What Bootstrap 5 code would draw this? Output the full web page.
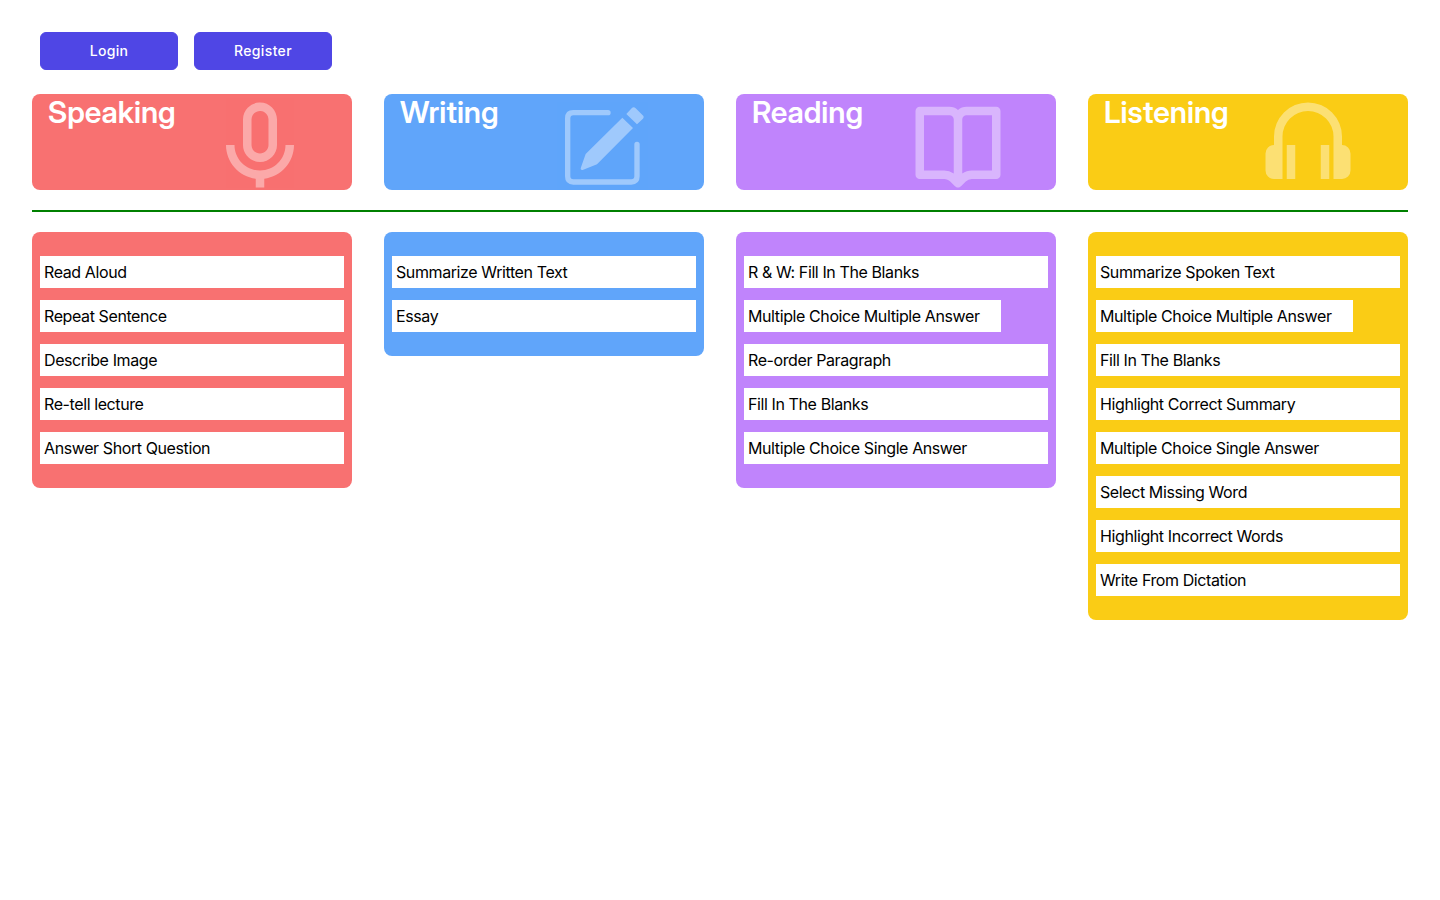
<!DOCTYPE html>
<html lang="en">
<head>
<meta charset="utf-8">
<meta name="viewport" content="width=device-width, initial-scale=1">
<title>Practice</title>
<link href="https://cdn.jsdelivr.net/npm/bootstrap@5.3.0/dist/css/bootstrap.min.css" rel="stylesheet">
<style>
  body { font-family: Inter, sans-serif; color: #000; }
  .page { padding: 32px; }
  .btn-indigo {
    --bs-btn-color: #fff; --bs-btn-bg: #4f46e5; --bs-btn-border-color: #4f46e5;
    --bs-btn-hover-color: #fff; --bs-btn-hover-bg: #4338ca; --bs-btn-hover-border-color: #4338ca;
    width: 138px; padding: 8px 16px; border-radius: 6px;
    font-size: 14px; line-height: 20px; font-weight: 500; letter-spacing: .025em;
  }
  .skills { --bs-gutter-x: 32px; --bs-gutter-y: 32px; }
  .skill { height: 96px; border-radius: 8px; padding-left: 16px; overflow: hidden; }
  .skill h2 { font-family: "Inter Display", Inter, sans-serif; font-size: 30px; line-height: 36px; font-weight: 600; }
  .skill svg { width: 102px; height: 102px; fill: #fff; opacity: .4; margin-right: 47px; flex: none; }
  .skill.coral svg { margin-right: 41px; }
  .skill.amber svg { margin-right: 49px; }
  .coral { background: #f87171; }
  .azure { background: #60a5fa; }
  .violet { background: #c084fc; }
  .amber { background: #facc15; }
  .rule { height: 2px; margin: 20px 0; background: green; border: 0; opacity: 1; }
  .tasks { border-radius: 8px; padding: 24px 8px; gap: 12px; }
  .tasks a { display: block; background: #fff; color: #000; padding: 4px; font-size: 16px; line-height: 24px; text-decoration: none; letter-spacing: -.025em; }
  .tasks .snug { align-self: flex-start; padding-right: 21px; }
</style>
</head>
<body>
<main class="page">
  <div class="d-flex gap-3 px-2 mb-4">
    <button type="button" class="btn btn-indigo">Login</button>
    <button type="button" class="btn btn-indigo">Register</button>
  </div>

  <div class="row row-cols-2 row-cols-lg-4 skills">
    <div class="col"><div class="skill coral d-flex justify-content-between align-items-start">
      <h2 class="text-white mb-0">Speaking</h2>
      <svg viewBox="0 0 24 24" aria-hidden="true"><path d="M16 12V6c0-2.217-1.785-4.021-3.979-4.021a.933.933 0 0 0-.209.025A4.006 4.006 0 0 0 8 6v6c0 2.206 1.794 4 4 4s4-1.794 4-4zm-6 0V6c0-1.103.897-2 2-2a.89.89 0 0 0 .163-.015C13.188 4.06 14 4.935 14 6v6c0 1.103-.897 2-2 2s-2-.897-2-2z"/><path d="M6 12H4c0 4.072 3.061 7.436 7 7.931V22h2v-2.069c3.939-.495 7-3.858 7-7.931h-2c0 3.309-2.691 6-6 6s-6-2.691-6-6z"/></svg>
    </div></div>
    <div class="col"><div class="skill azure d-flex justify-content-between align-items-start">
      <h2 class="text-white mb-0">Writing</h2>
      <svg viewBox="46 12 306 306" aria-hidden="true"><path fill="none" stroke="#fff" stroke-width="16" stroke-linecap="round" d="M205 68H101Q84 68 84 85V259Q84 276 101 276H275Q292 276 292 259V163"/><path d="M248 83L280 114L172 223L129 240Q122 241 123 235L138 192ZM260 72L276 55Q282 49 288 55L309 76Q315 81 309 87L292 103Z"/></svg>
    </div></div>
    <div class="col"><div class="skill violet d-flex justify-content-between align-items-start">
      <h2 class="text-white mb-0">Reading</h2>
      <svg viewBox="0 0 24 24" aria-hidden="true"><path d="M21 3h-7a2.98 2.98 0 0 0-2 .78A2.98 2.98 0 0 0 10 3H3a1 1 0 0 0-1 1v15a1 1 0 0 0 1 1h5.758c.526 0 1.042.214 1.414.586l1.121 1.121c.009.009.021.012.03.021.086.08.182.15.294.196h.002a.996.996 0 0 0 .762 0h.002c.112-.046.208-.117.294-.196.009-.009.021-.012.03-.021l1.121-1.121A2.015 2.015 0 0 1 15.242 20H21a1 1 0 0 0 1-1V4a1 1 0 0 0-1-1zM8.758 18H4V5h6c.552 0 1 .449 1 1v12.689A4.032 4.032 0 0 0 8.758 18zM20 18h-4.758c-.799 0-1.584.246-2.242.689V6c0-.551.448-1 1-1h6v13z"/></svg>
    </div></div>
    <div class="col"><div class="skill amber d-flex justify-content-between align-items-start">
      <h2 class="text-white mb-0">Listening</h2>
      <svg viewBox="0 0 24 24" aria-hidden="true"><path d="M12 2a8 8 0 0 0-8 8v2a2 2 0 0 0-2 2v4a2 2 0 0 0 2 2h2V10a6 6 0 0 1 12 0v10h2a2 2 0 0 0 2-2v-4a2 2 0 0 0-2-2v-2a8 8 0 0 0-8-8zM7 12h2v8H7zM15 12h2v8h-2z"/></svg>
    </div></div>
  </div>

  <hr class="rule">

  <div class="row row-cols-2 row-cols-lg-4 skills align-items-start">
    <div class="col"><nav class="tasks coral d-flex flex-column" aria-label="Speaking">
      <a href="#">Read Aloud</a>
      <a href="#">Repeat Sentence</a>
      <a href="#">Describe Image</a>
      <a href="#">Re-tell lecture</a>
      <a href="#">Answer Short Question</a>
    </nav></div>
    <div class="col"><nav class="tasks azure d-flex flex-column" aria-label="Writing">
      <a href="#">Summarize Written Text</a>
      <a href="#">Essay</a>
    </nav></div>
    <div class="col"><nav class="tasks violet d-flex flex-column" aria-label="Reading">
      <a href="#">R &amp; W: Fill In The Blanks</a>
      <a href="#" class="snug">Multiple Choice Multiple Answer</a>
      <a href="#">Re-order Paragraph</a>
      <a href="#">Fill In The Blanks</a>
      <a href="#">Multiple Choice Single Answer</a>
    </nav></div>
    <div class="col"><nav class="tasks amber d-flex flex-column" aria-label="Listening">
      <a href="#">Summarize Spoken Text</a>
      <a href="#" class="snug">Multiple Choice Multiple Answer</a>
      <a href="#">Fill In The Blanks</a>
      <a href="#">Highlight Correct Summary</a>
      <a href="#">Multiple Choice Single Answer</a>
      <a href="#">Select Missing Word</a>
      <a href="#">Highlight Incorrect Words</a>
      <a href="#">Write From Dictation</a>
    </nav></div>
  </div>
</main>
<script src="https://cdn.jsdelivr.net/npm/bootstrap@5.3.0/dist/js/bootstrap.bundle.min.js"></script>
</body>
</html>
